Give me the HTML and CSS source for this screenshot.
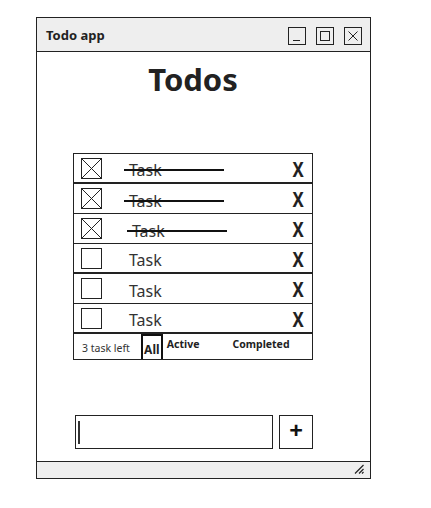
FILE: index.html
```html
<!DOCTYPE html>
<html lang="en">
<head>
  <meta charset="UTF-8" />
  <meta name="viewport" content="width=device-width, initial-scale=1.0"/>
  <title>Todo app</title>
  <link rel="stylesheet" href="styles.css">
</head>
<body>
  <div class="window">
    <div class="titlebar">
      <span class="title">Todo app</span>
      <div class="win-buttons">
        <span class="win-btn">
          <svg width="18" height="18" viewBox="0 0 18 18"><line x1="5" y1="13.5" x2="12" y2="13.5" stroke="#222" stroke-width="1"/></svg>
        </span>
        <span class="win-btn">
          <svg width="18" height="18" viewBox="0 0 18 18"><rect x="4.5" y="4.5" width="9" height="9" fill="none" stroke="#222" stroke-width="1"/></svg>
        </span>
        <span class="win-btn">
          <svg width="18" height="18" viewBox="0 0 18 18"><path d="M4.5 4.5 L13.5 13.5 M13.5 4.5 L4.5 13.5" stroke="#222" stroke-width="1"/></svg>
        </span>
      </div>
    </div>

    <div class="content">
      <h1>Todos</h1>

      <div class="todo-list">
        <div class="row thick">
          <svg class="check" width="21" height="21" viewBox="0 0 21 21"><rect x="0.5" y="0.5" width="20" height="20" fill="#fff" stroke="#222"/><path d="M1 1 L20 20 M20 1 L1 20" stroke="#222" stroke-width="1"/></svg>
          <span class="task done">Task</span>
          <span class="delete">X</span>
        </div>
        <div class="row">
          <svg class="check" width="21" height="21" viewBox="0 0 21 21"><rect x="0.5" y="0.5" width="20" height="20" fill="#fff" stroke="#222"/><path d="M1 1 L20 20 M20 1 L1 20" stroke="#222" stroke-width="1"/></svg>
          <span class="task done">Task</span>
          <span class="delete">X</span>
        </div>
        <div class="row">
          <svg class="check" width="21" height="21" viewBox="0 0 21 21"><rect x="0.5" y="0.5" width="20" height="20" fill="#fff" stroke="#222"/><path d="M1 1 L20 20 M20 1 L1 20" stroke="#222" stroke-width="1"/></svg>
          <span class="task done shifted">Task</span>
          <span class="delete">X</span>
        </div>
        <div class="row thick">
          <span class="box"></span>
          <span class="task">Task</span>
          <span class="delete">X</span>
        </div>
        <div class="row">
          <span class="box"></span>
          <span class="task">Task</span>
          <span class="delete">X</span>
        </div>
        <div class="row thick">
          <span class="box"></span>
          <span class="task">Task</span>
          <span class="delete">X</span>
        </div>
        <div class="list-footer">
          <span class="count">3 task left</span>
          <span class="filter selected">All</span>
          <span class="filter">Active</span>
          <span class="filter completed">Completed</span>
        </div>
      </div>

      <div class="add-row">
        <div class="new-todo"><span class="cursor"></span></div>
        <button class="add-btn">+</button>
      </div>
    </div>

    <div class="statusbar">
      <svg class="grip" width="10" height="10" viewBox="0 0 10 10"><path d="M1 9.5 L9.5 1 M5 9.5 L9.5 5 M8 9.5 L9.5 8" stroke="#222" stroke-width="1.2"/></svg>
    </div>
  </div>
</body>
</html>
```

FILE: styles.css
```css
body {
  margin: 0;
  background-color: white;
  font-family: "Noto Sans", "Open Sans", sans-serif;
  color: #222;
}

.window {
  margin: 17px 0 0 36px;
  width: 335px;
  height: 462px;
  box-sizing: border-box;
  border: 1px solid #222;
  display: flex;
  flex-direction: column;
}

.titlebar {
  height: 34px;
  box-sizing: border-box;
  border-bottom: 1px solid #222;
  background-color: #eeeeee;
  display: flex;
  align-items: center;
  justify-content: space-between;
  padding: 0 8px 0 9px;
}

.title {
  font-size: 13px;
  font-weight: 700;
  color: #222;
}

.win-buttons {
  display: flex;
  gap: 10px;
  padding-top: 2px;
}

.win-btn {
  width: 18px;
  height: 18px;
  box-sizing: border-box;
  border: 1px solid #222;
  display: flex;
}

.win-btn svg {
  margin: -1px;
}

.content {
  flex: 1;
  display: flex;
  flex-direction: column;
  padding-left: 36px;
}

h1 {
  width: 240px;
  margin: 6px 0 0 0;
  text-align: center;
  font-size: 31px;
  line-height: 42px;
  font-weight: 700;
  color: #222;
}

.todo-list {
  margin-top: 53px;
  width: 240px;
  box-sizing: border-box;
  border: 1px solid #222;
}

.row {
  height: 30px;
  box-sizing: border-box;
  border-bottom: 1px solid #222;
  display: flex;
  align-items: center;
  padding: 0 7px 0 7px;
}

.row.thick {
  border-bottom-width: 2px;
}

.check {
  flex-shrink: 0;
}

.box {
  width: 21px;
  height: 21px;
  box-sizing: border-box;
  border: 1px solid #222;
  flex-shrink: 0;
}

.task {
  position: relative;
  margin-left: 27px;
  margin-top: 4px;
  font-size: 16px;
  color: #333;
}

.task.shifted {
  margin-left: 30px;
}

.task.done::after {
  content: "";
  position: absolute;
  left: -5px;
  top: 10px;
  width: 100px;
  height: 2px;
  background-color: #111;
}

.delete {
  margin-left: auto;
  margin-top: 1px;
  font-size: 21px;
  font-weight: 700;
  color: #222;
  transform: scaleX(0.8);
}

.list-footer {
  height: 25px;
  display: flex;
  align-items: stretch;
  font-size: 10.5px;
  color: #222;
}

.count {
  padding-left: 8px;
  align-self: center;
  margin-top: 2px;
  color: #333;
}

.filter {
  font-weight: 700;
  padding-top: 3px;
}

.filter.selected {
  margin-left: 11px;
  width: 22px;
  box-sizing: border-box;
  border: 2px solid #111;
  border-bottom: none;
  font-size: 12px;
  padding-top: 5px;
  text-align: center;
}

.filter.selected + .filter {
  margin-left: 4px;
}

.filter.completed {
  margin-left: 33px;
}

.add-row {
  margin-top: auto;
  margin-bottom: 12px;
  display: flex;
  gap: 6px;
  padding-left: 2px;
}

.new-todo {
  width: 198px;
  height: 34px;
  box-sizing: border-box;
  border: 1.5px solid #222;
  display: flex;
  align-items: center;
  padding-left: 2px;
}

.cursor {
  width: 2px;
  height: 23px;
  background-color: #333;
}

.add-btn {
  width: 34px;
  height: 34px;
  box-sizing: border-box;
  border: 1px solid #222;
  background-color: white;
  font-family: "Noto Sans", sans-serif;
  font-size: 24px;
  font-weight: 700;
  line-height: 1;
  padding: 0 0 4px 0;
  color: #111;
}

.statusbar {
  height: 17px;
  box-sizing: border-box;
  border-top: 1px solid #222;
  background-color: #eeeeee;
  display: flex;
  justify-content: flex-end;
  align-items: flex-end;
  padding: 0 6px 4px 0;
}
```
